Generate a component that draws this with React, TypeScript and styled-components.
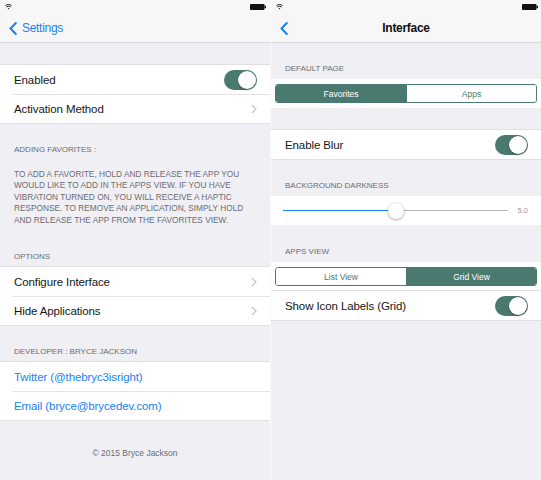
import React from "react";
import styled, { createGlobalStyle } from "styled-components";

const TEAL = "#4a796f";
const BLUE = "#1a7ff6";
const GREY_TEXT = "#6d6d72";

const Global = createGlobalStyle`
  html, body { margin: 0; padding: 0; background: #efeff4; }
  body {
    font-family: "Liberation Sans", Arial, sans-serif;
    -webkit-font-smoothing: antialiased;
  }
  * { box-sizing: border-box; }
`;

const Screen = styled.div`
  display: flex;
  width: 541px;
  height: 480px;
  overflow: hidden;
  background: #efeff4;
`;

const Pane = styled.section<{ $w: number }>`
  width: ${(p) => p.$w}px;
  flex: none;
  display: flex;
  flex-direction: column;
  background: #efeff4;
`;

const Split = styled.div`
  width: 1px;
  flex: none;
  background: #fafafb;
`;

const TopBar = styled.header`
  height: 43px;
  flex: none;
  background: #f7f7f8;
  border-bottom: 1px solid #d8d8dc;
  display: flex;
  flex-direction: column;
`;

const StatusBar = styled.div<{ $right: number }>`
  height: 14px;
  display: flex;
  justify-content: space-between;
  align-items: flex-start;
  padding: 4px ${(p) => p.$right}px 0 5px;
`;

const NavRow = styled.div`
  height: 28px;
  display: grid;
  grid-template-columns: 1fr auto 1fr;
  align-items: center;
`;

const BackButton = styled.div`
  display: flex;
  align-items: center;
  gap: 5px;
  padding-left: 9px;
  color: ${BLUE};
  font-size: 12px;
  letter-spacing: -0.3px;
`;

const NavTitle = styled.div`
  font-size: 12px;
  font-weight: bold;
  letter-spacing: -0.3px;
  color: #111;
`;

const Group = styled.div<{ $mt?: number }>`
  margin-top: ${(p) => p.$mt ?? 0}px;
  background: #fff;
  box-shadow: 0 -1px 0 #e0e0e4, 0 1px 0 #e0e0e4;
`;

const Row = styled.div<{ $link?: boolean }>`
  height: 29px;
  display: flex;
  align-items: center;
  justify-content: space-between;
  gap: 8px;
  padding: 0 13px 0 14px;
  font-size: 11.5px;
  letter-spacing: -0.1px;
  color: ${(p) => (p.$link ? BLUE : "#161616")};
  & + & {
    background: linear-gradient(#e4e4e7, #e4e4e7) 13px 0 / 100% 1px no-repeat,
      #fff;
  }
`;

const SectionTitle = styled.div<{ $pt?: number }>`
  padding: ${(p) => p.$pt ?? 21}px 14px 4px;
  font-size: 8px;
  line-height: 12px;
  color: ${GREY_TEXT};
  text-transform: uppercase;
  white-space: nowrap;
`;

const Note = styled.p`
  margin: 0;
  padding: 8.5px 14px 4px;
  font-size: 8.3px;
  line-height: 11.5px;
  color: ${GREY_TEXT};
  white-space: pre-line;
`;

const Copyright = styled.div`
  padding-top: 27px;
  text-align: center;
  font-size: 8.5px;
  line-height: 12px;
  color: ${GREY_TEXT};
`;

const SegmentBlock = styled.div<{ $mt?: number }>`
  margin-top: ${(p) => p.$mt ?? 0}px;
  background: #fff;
  padding: 5px 4px;
`;

const Segmented = styled.div`
  display: grid;
  grid-template-columns: 1fr 1fr;
  height: 19px;
  border: 1px solid ${TEAL};
  border-radius: 3px;
  overflow: hidden;
`;

const Segment = styled.div<{ $on: boolean }>`
  display: flex;
  align-items: center;
  justify-content: center;
  font-size: 8.5px;
  background: ${(p) => (p.$on ? TEAL : "#fff")};
  color: ${(p) => (p.$on ? "#fff" : TEAL)};
  & + & {
    border-left: 1px solid ${TEAL};
  }
`;

const SwitchTrack = styled.div<{ $on: boolean }>`
  width: 33px;
  height: 20px;
  flex: none;
  border-radius: 10px;
  background: ${(p) => (p.$on ? TEAL : "#e5e5ea")};
  display: flex;
  align-items: center;
  justify-content: ${(p) => (p.$on ? "flex-end" : "flex-start")};
  padding: 1px;
`;

const SwitchKnob = styled.div`
  width: 18px;
  height: 18px;
  border-radius: 50%;
  background: #fff;
  box-shadow: 0 1px 2px rgba(0, 0, 0, 0.3), 0 0 0 0.5px rgba(0, 0, 0, 0.1);
`;

const SliderRow = styled.div`
  height: 29px;
  background: #fff;
  display: flex;
  align-items: center;
  gap: 8px;
  padding: 0 13px 0 12px;
`;

const SliderTrack = styled.div`
  flex: 1;
  height: 1px;
  display: flex;
  align-items: center;
`;

const TrackPart = styled.div<{ $fill: boolean }>`
  height: 1px;
  background: ${(p) => (p.$fill ? BLUE : "#b8b8bc")};
`;

const SliderKnob = styled.div`
  width: 16px;
  height: 16px;
  flex: none;
  margin: 0 -8px;
  border-radius: 50%;
  background: #fff;
  box-shadow: 0 1px 3px rgba(0, 0, 0, 0.3), 0 0 0 0.5px rgba(0, 0, 0, 0.08);
  position: relative;
  z-index: 1;
`;

const SliderValue = styled.span`
  font-size: 7.5px;
  color: #9b9b9f;
  width: 12px;
  text-align: right;
`;

const Wifi = () => (
  <svg width="7" height="6" viewBox="0 0 7 6">
    <path d="M0.3 1.8 A4.6 4.6 0 0 1 6.7 1.8" stroke="#222" strokeWidth="1" fill="none" />
    <path d="M1.5 3 A3 3 0 0 1 5.5 3" stroke="#222" strokeWidth="1" fill="none" />
    <path d="M2.6 4.3 L3.5 5.4 L4.4 4.3 A1.4 1.4 0 0 0 2.6 4.3 Z" fill="#222" />
  </svg>
);

const Battery = () => (
  <svg width="16" height="6" viewBox="0 0 16 6">
    <rect x="0" y="0" width="14.5" height="6" rx="1" fill="#111" />
    <rect x="14.5" y="1.8" width="1.5" height="2.4" fill="#111" />
  </svg>
);

const BackChevron = () => (
  <svg width="8" height="13" viewBox="0 0 8 13">
    <path d="M6.8 1 L1.5 6.5 L6.8 12" stroke={BLUE} strokeWidth="2" fill="none" strokeLinecap="round" strokeLinejoin="round" />
  </svg>
);

const Disclosure = () => (
  <svg width="6" height="10" viewBox="0 0 6 10">
    <path d="M1 1 L5 5 L1 9" stroke="#c5c5ca" strokeWidth="1.2" fill="none" />
  </svg>
);

const Switch = ({ on }: { on: boolean }) => (
  <SwitchTrack $on={on}>
    <SwitchKnob />
  </SwitchTrack>
);

const Header = ({ title, back, right }: { title?: string; back?: string; right: number }) => (
  <TopBar>
    <StatusBar $right={right}>
      <Wifi />
      <Battery />
    </StatusBar>
    <NavRow>
      <BackButton>
        <BackChevron />
        {back && <span>{back}</span>}
      </BackButton>
      <NavTitle>{title}</NavTitle>
      <div />
    </NavRow>
  </TopBar>
);

const favoritesHelp =
  "To add a favorite, hold and release the app you\n" +
  "would like to add in the apps view. If you have\n" +
  "vibration turned on, you will receive a haptic\n" +
  "response. To remove an application, simply hold\n" +
  "and release the app from the favorites view.";

const darkness = 5;

export default function App() {
  const pct = (darkness / 10) * 100;
  return (
    <>
      <Global />
      <Screen>
        <Pane $w={270}>
          <Header back="Settings" right={4} />
          <Group $mt={22}>
            <Row>
              Enabled
              <Switch on />
            </Row>
            <Row>
              Activation Method
              <Disclosure />
            </Row>
          </Group>
          <SectionTitle>Adding Favorites :</SectionTitle>
          <Note>{favoritesHelp.toUpperCase()}</Note>
          <SectionTitle>Options</SectionTitle>
          <Group>
            <Row>
              Configure Interface
              <Disclosure />
            </Row>
            <Row>
              Hide Applications
              <Disclosure />
            </Row>
          </Group>
          <SectionTitle>Developer : Bryce Jackson</SectionTitle>
          <Group>
            <Row $link>Twitter (@thebryc3isright)</Row>
            <Row $link>Email (bryce@brycedev.com)</Row>
          </Group>
          <Copyright>© 2015 Bryce Jackson</Copyright>
        </Pane>
        <Split />
        <Pane $w={270}>
          <Header title="Interface" right={3} />
          <SectionTitle $pt={20}>Default Page</SectionTitle>
          <SegmentBlock>
            <Segmented>
              <Segment $on>Favorites</Segment>
              <Segment $on={false}>Apps</Segment>
            </Segmented>
          </SegmentBlock>
          <Group $mt={22}>
            <Row>
              Enable Blur
              <Switch on />
            </Row>
          </Group>
          <SectionTitle>Background Darkness</SectionTitle>
          <SliderRow>
            <SliderTrack>
              <TrackPart $fill style={{ width: `${pct}%` }} />
              <SliderKnob />
              <TrackPart $fill={false} style={{ width: `${100 - pct}%` }} />
            </SliderTrack>
            <SliderValue>{darkness.toFixed(1)}</SliderValue>
          </SliderRow>
          <SectionTitle>Apps View</SectionTitle>
          <SegmentBlock>
            <Segmented>
              <Segment $on={false}>List View</Segment>
              <Segment $on>Grid View</Segment>
            </Segmented>
          </SegmentBlock>
          <Group>
            <Row>
              Show Icon Labels (Grid)
              <Switch on />
            </Row>
          </Group>
        </Pane>
      </Screen>
    </>
  );
}
